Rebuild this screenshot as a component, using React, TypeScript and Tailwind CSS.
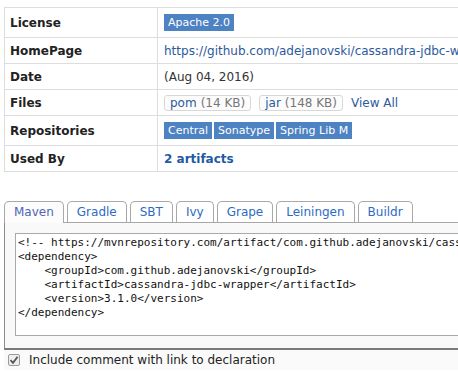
import React from "react";

const rows = [
  { label: "License", h: "h-[30px]" },
  { label: "HomePage", h: "h-[26px]" },
  { label: "Date", h: "h-[26px]" },
  { label: "Files", h: "h-[26px]" },
  { label: "Repositories", h: "h-[30px]" },
  { label: "Used By", h: "h-[26px]" },
];

const tabs = ["Maven", "Gradle", "SBT", "Ivy", "Grape", "Leiningen", "Buildr"];

const code = `<!-- https://mvnrepository.com/artifact/com.github.adejanovski/cassandra-jdbc-wrapper -->
<dependency>
    <groupId>com.github.adejanovski</groupId>
    <artifactId>cassandra-jdbc-wrapper</artifactId>
    <version>3.1.0</version>
</dependency>`;

function Badge({ children }: { children: React.ReactNode }) {
  return (
    <span className="inline-block h-[17px] px-1 bg-[#4d82c3] text-white text-[11px] leading-[17px] whitespace-nowrap">
      {children}
    </span>
  );
}

function FileBox({ name, size }: { name: string; size: string }) {
  return (
    <span className="inline-flex items-center h-4 px-[5px] border border-[#d8d8d8] rounded-[3px] bg-[#fcfcfc] text-xs whitespace-nowrap">
      <span className="text-[#2b5a9c]">{name}</span>
      <span className="text-[#777] ml-1">{size}</span>
    </span>
  );
}

function value(label: string) {
  switch (label) {
    case "License":
      return <Badge>Apache 2.0</Badge>;
    case "HomePage":
      return (
        <span className="text-[#2b5a9c] whitespace-nowrap">
          https://github.com/adejanovski/cassandra-jdbc-wrapper
        </span>
      );
    case "Date":
      return <span className="text-[#333]">(Aug 04, 2016)</span>;
    case "Files":
      return (
        <div className="flex items-center">
          <FileBox name="pom" size="(14 KB)" />
          <span className="ml-2">
            <FileBox name="jar" size="(148 KB)" />
          </span>
          <span className="ml-2 text-[#2b5a9c]">View All</span>
        </div>
      );
    case "Repositories":
      return (
        <div className="flex gap-[2px]">
          <Badge>Central</Badge>
          <Badge>Sonatype</Badge>
          <Badge>Spring Lib M</Badge>
        </div>
      );
    default:
      return <span className="font-bold text-[#1f5aa6]">2 artifacts</span>;
  }
}

export default function App() {
  return (
    <div
      className="w-[458px] h-[371px] overflow-hidden bg-white text-[#222]"
      style={{ fontFamily: '"DejaVu Sans", Verdana, sans-serif' }}
    >
      <div className="w-[640px] pt-[7px] pl-1">
        <table className="w-[620px] border-collapse text-xs">
          <tbody>
            {rows.map((r) => (
              <tr key={r.label} className={r.h}>
                <td className="w-[153px] border border-[#dddddd] pl-[5px] font-bold align-middle">
                  {r.label}
                </td>
                <td className="border border-[#dddddd] pl-[6px] align-middle">{value(r.label)}</td>
              </tr>
            ))}
          </tbody>
        </table>

        <div className="mt-[29px]">
          <div className="flex gap-[3px] h-[21px]">
            {tabs.map((t, i) => (
              <div
                key={t}
                className={
                  i === 0
                    ? "relative z-10 h-[22px] px-[9px] border border-b-0 border-[#a8a8a8] rounded-t-[5px] bg-[#fcfcfc] text-xs leading-[21px] text-[#4f65b4]"
                    : "h-[21px] px-[9px] border border-b-0 border-[#a8a8a8] rounded-t-[5px] bg-white text-xs leading-[21px] text-[#2d6bc2]"
                }
              >
                {t}
              </div>
            ))}
          </div>
          <div className="w-[620px] border-t border-l border-t-[#a8a8a8] border-l-[#8a8a8a] border-b-2 border-b-[#7a7a7a] bg-[#f9f9f9] pt-[10px] pl-[10px] pb-[12px]">
            <pre
              className="h-[103px] border border-[#aaaaaa] bg-white pt-[2px] pl-[2px] text-[11px] leading-[14px] text-[#111] overflow-hidden"
              style={{ fontFamily: '"DejaVu Sans Mono", monospace' }}
            >
              {code}
            </pre>
          </div>
          <div className="flex items-center h-[20px] pl-1 bg-[#fafafa]">
            <span className="flex items-center justify-center w-[12px] h-[12px] border border-[#9a9a9a] rounded-[2px] bg-[#eeeeee]">
              <svg width="10" height="10" viewBox="0 0 10 10">
                <path d="M1.5 5.2 L4 7.8 L8.6 1.8" fill="none" stroke="#555" strokeWidth="1.8" />
              </svg>
            </span>
            <span className="ml-[9px] text-xs text-[#222]">Include comment with link to declaration</span>
          </div>
        </div>
      </div>
    </div>
  );
}
